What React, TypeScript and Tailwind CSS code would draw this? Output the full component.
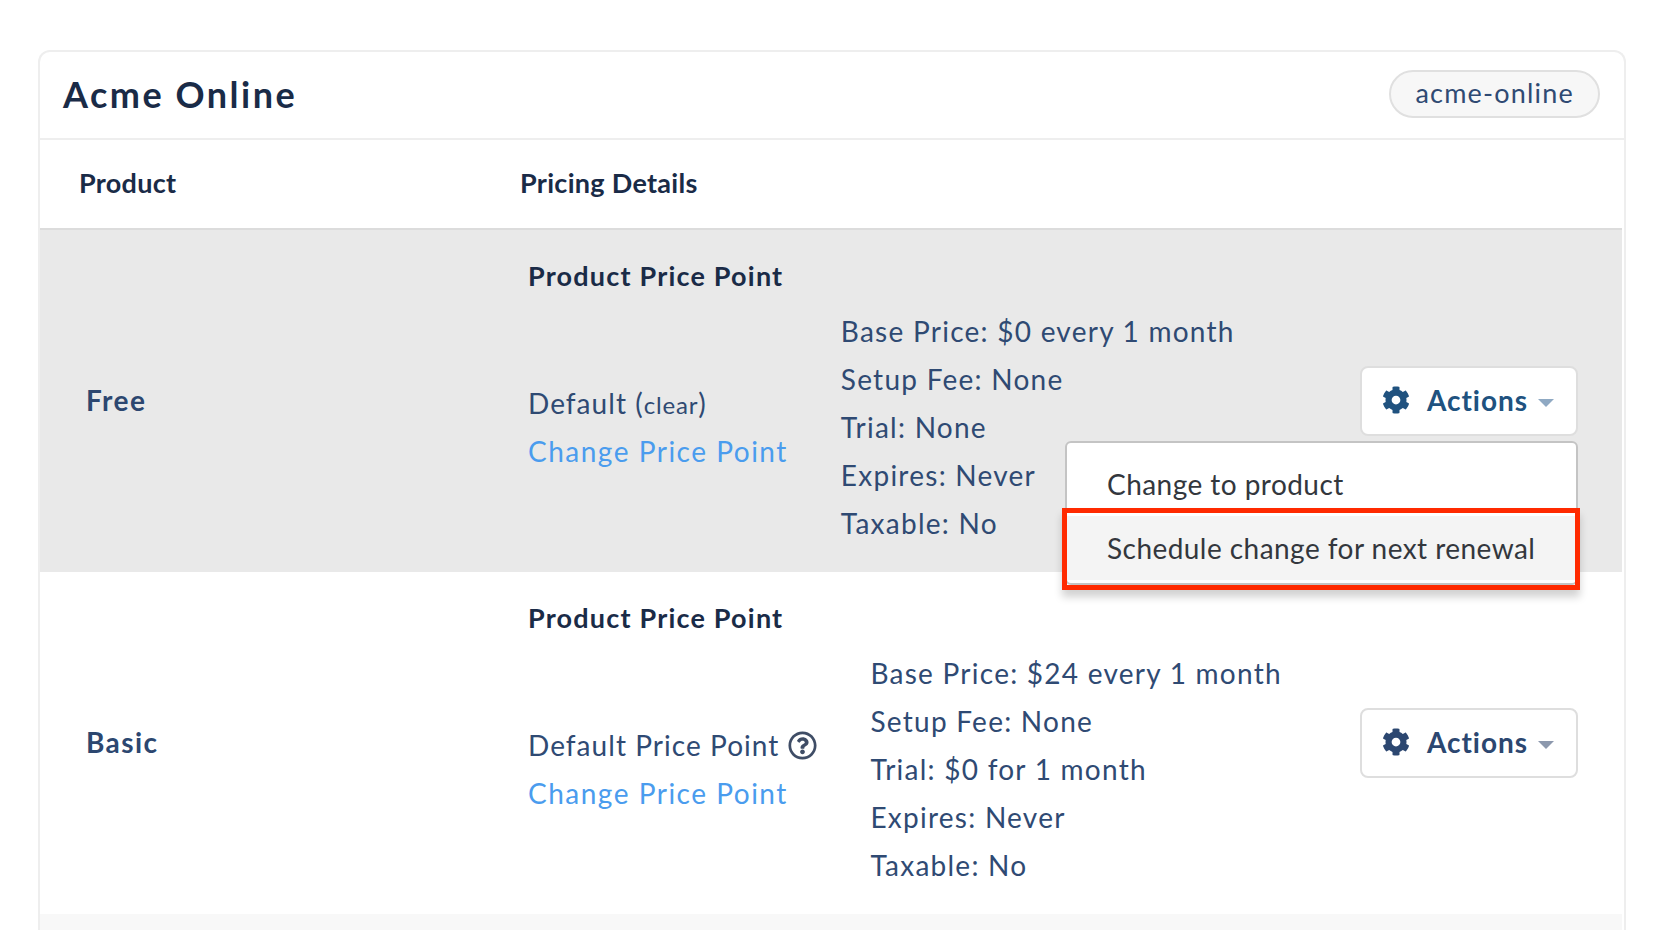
import { FaCog, FaRegQuestionCircle } from 'react-icons/fa';

function ActionsButton({ color, caret, open }: { color: string; caret: string; open?: boolean }) {
  return (
    <div className="relative">
      <button className={`flex h-[70px] w-[218px] items-center rounded-lg border-2 border-[#dedede] bg-white pb-[2px] pl-[20px] text-[28px] font-bold tracking-[0.95px] ${color}`}>
        <FaCog className="h-[28px] w-[28px]" />
        <span className="ml-[17px]">Actions</span>
        <span className={`ml-[10px] mt-[6px] h-0 w-0 border-x-[8px] border-t-[8px] border-x-transparent ${caret}`} />
      </button>
      {open && (
        <div className="absolute right-0 top-full z-10 mt-[5px] h-[144px] w-[513px] rounded-md border-2 border-[#c4c4c4] bg-white pt-[9px] text-[28px] tracking-[0.45px] text-[#33373d]">
          <div className="flex h-[64px] items-center pb-[1px] pl-[40px]">Change to product</div>
          <div className="flex h-[64px] items-center bg-[#f4f4f4] pb-[1px] pl-[40px]">Schedule change for next renewal</div>
          <div className="pointer-events-none absolute -bottom-[7px] -left-[5px] -right-[4px] top-[65px] border-[5px] border-[#ff2a00] shadow-[0_7px_8px_rgba(0,0,0,0.18)]" />
        </div>
      )}
    </div>
  );
}

function PriceRow({
  name,
  point,
  lines,
  highlight,
}: {
  name: string;
  point: React.ReactNode;
  lines: string[];
  highlight?: boolean;
}) {
  return (
    <div className={`flex h-[342px] items-center ${highlight ? 'mr-[2px] bg-[#e9e9e9]' : ''}`}>
      <div className="w-[488px] pb-[2px] pl-[46px] text-[28px] font-bold tracking-[1.4px] text-[#2c4770]">{name}</div>
      <div className="pb-[25px] pt-[22px]">
        <div className="mb-[7px] text-[27px] font-bold leading-[48px] tracking-[1.2px] text-[#1a2b47]">Product Price Point</div>
        <div className="flex items-center gap-[53px]">
          <div className="text-[28px] leading-[48px] tracking-[1.5px]">
            <div className="flex h-[48px] items-center tracking-[1.05px] text-[#2f4a73]">{point}</div>
            <a className="block text-[#4a9cee]">Change Price Point</a>
          </div>
          <div className="text-[28px] leading-[48px] tracking-[1.25px] text-[#2f4a73]">
            {lines.map((l) => (
              <div key={l}>{l}</div>
            ))}
          </div>
        </div>
      </div>
      <div className={`ml-auto ${highlight ? 'pr-[44px]' : 'pr-[46px]'}`}>
        <ActionsButton
          color={highlight ? 'text-[#20527f]' : 'text-[#2c4770]'}
          caret={highlight ? 'border-t-[#8fa9c3]' : 'border-t-[#8c98ad]'}
          open={highlight}
        />
      </div>
    </div>
  );
}

export default function App() {
  return (
    <div className="h-[930px] overflow-hidden bg-white px-[38px] pt-[50px] font-['Lato',sans-serif]">
      <div className="rounded-t-xl border-2 border-b-0 border-[#eeeeee]">
        {/* Site header */}
        <div className="flex h-[88px] items-center justify-between border-b-2 border-[#eeeeee] pb-[3px] pl-[23px] pr-[24px]">
          <h1 className="text-[36px] font-bold tracking-[2.5px] text-[#1a2b47]">Acme Online</h1>
          <span className="flex h-[48px] items-center rounded-full border-2 border-[#e0e0e0] bg-[#f7f7f7] px-[24px] pb-[1px] text-[27px] tracking-[1.2px] text-[#2f4a73]">
            acme-online
          </span>
        </div>

        {/* Table head */}
        <div className="mr-[2px] flex h-[90px] items-center border-b-2 border-[#dcdcdc] pb-[2px] text-[27px] font-bold tracking-[0.3px] text-[#1a2b47]">
          <div className="w-[480px] pl-[39px]">Product</div>
          <div>Pricing Details</div>
        </div>

        <PriceRow
          name="Free"
          highlight
          point={
            <>
              Default&nbsp;(<span className="pt-[3px] text-[24px] leading-[40px] tracking-[0.8px]">clear</span>)
            </>
          }
          lines={['Base Price: $0 every 1 month', 'Setup Fee: None', 'Trial: None', 'Expires: Never', 'Taxable: No']}
        />
        <PriceRow
          name="Basic"
          point={
            <>
              Default Price Point
              <FaRegQuestionCircle className="ml-[9px] h-[29px] w-[29px] text-[#3f4d66]" />
            </>
          }
          lines={['Base Price: $24 every 1 month', 'Setup Fee: None', 'Trial: $0 for 1 month', 'Expires: Never', 'Taxable: No']}
        />

        <div className="mr-[2px] h-[40px] bg-[#f8f8f8]" />
      </div>
    </div>
  );
}
